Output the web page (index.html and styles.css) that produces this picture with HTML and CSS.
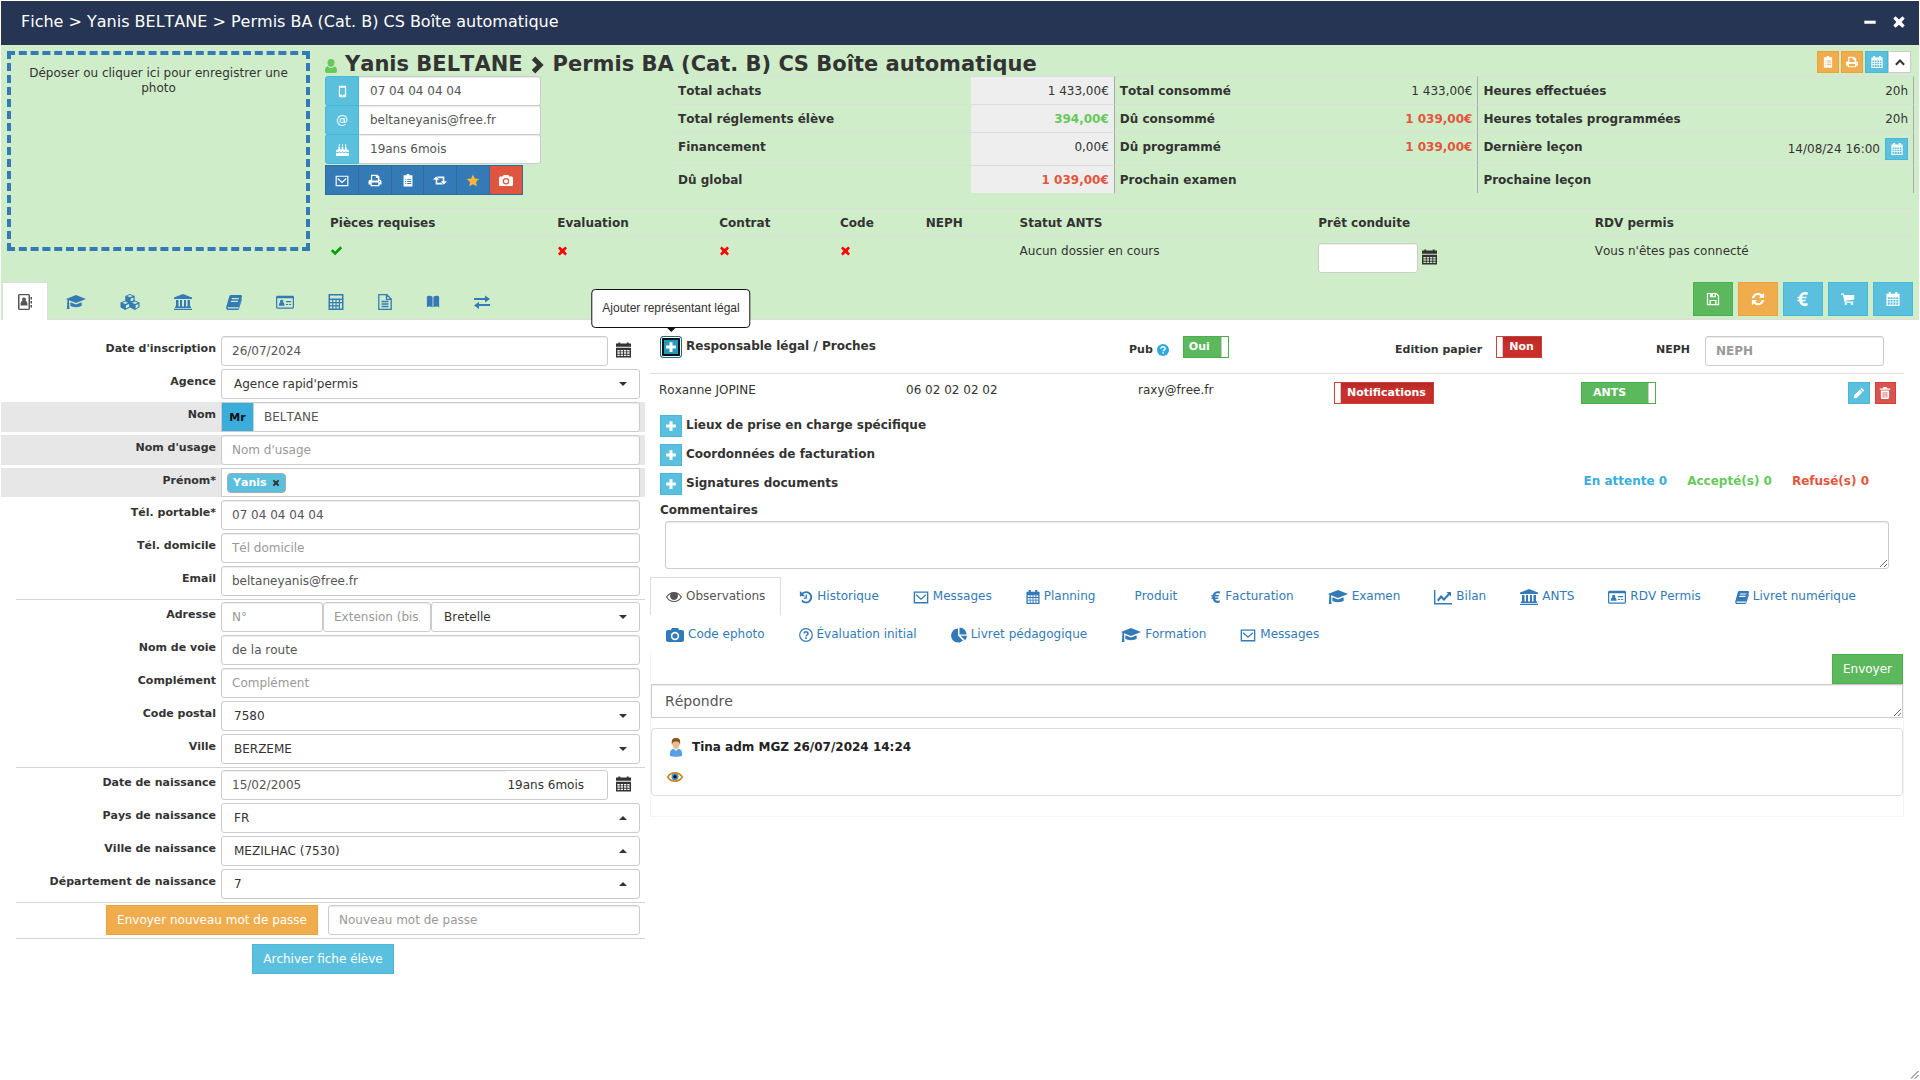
FILE: index.html
```html
<!DOCTYPE html>
<html lang="fr">
<head>
    <meta charset="UTF-8">
    <meta name="viewport" content="width=device-width, initial-scale=1.0">
    <title>Fiche - Yanis BELTANE</title>
    <link rel="stylesheet" href="styles.css">
</head>
<body>
    <!-- Icons -->
    <svg class="sprite" aria-hidden="true">
        <symbol id="i-user" viewBox="0 0 12 16"><path d="M6 1a3.6 3.6 0 0 1 3.5 3.8C9.500 7 8 8.900 6 8.900S2.500 7 2.500 4.800A3.600 3.600 0 0 1 6 1zM2.600 8.200C3.500 9.300 4.700 10 6 10s2.500-.7 3.400-1.800C11.500 8.800 12 11 12 13c0 1.300-.8 2-2 2H2c-1.200 0-2-.7-2-2 0-2 .5-4.200 2.600-4.800z"/></symbol>
        <symbol id="i-chevron" viewBox="0 0 12 16"><path d="M3.500.5 11 8l-7.500 7.500L.5 12.500 5 8 .5 3.500z"/></symbol>
        <symbol id="i-up" viewBox="0 0 16 16"><path d="M8 4l6.500 6.500-2 2L8 8l-4.500 4.500-2-2z"/></symbol>
        <symbol id="i-mobile" viewBox="0 0 16 16"><path fill-rule="evenodd" d="M5 1h6c.8 0 1.500.7 1.500 1.500v11c0 .8-.7 1.500-1.500 1.500H5c-.8 0-1.500-.7-1.500-1.500v-11C3.500 1.700 4.200 1 5 1zm0 2.500v8.500h6V3.500zM8 12.700a.8.8 0 1 0 0 1.600.8.8 0 0 0 0-1.600z"/></symbol>
        <symbol id="i-cake" viewBox="0 0 16 16"><path d="M3 4.500h2V8h2V4.500h2V8h2V4.500h2V8h.5C15 8 16 9 16 10c-1 1.500-2.500 1.500-4 0-1.500 1.500-2.500 1.500-4 0-1.500 1.500-2.500 1.500-4 0-1.500 1.500-3 1.500-4 0 0-1 1-2 2.500-2H3zM0 12c1.500 1 3 .7 4-.5 1.300 1.200 2.700 1.200 4 0 1.300 1.200 2.700 1.200 4 0 1 1.200 2.500 1.500 4 .5v4H0zM4 1c1 1 1 3 0 3s-1-2 0-3zm4 0c1 1 1 3 0 3s-1-2 0-3zm4 0c1 1 1 3 0 3s-1-2 0-3z"/></symbol>
        <symbol id="i-envelope" viewBox="0 0 18 16"><path d="M1.500 2.500h15v12h-15zM3.500 5.500 9 10.500l5.500-5" fill="none" stroke="currentColor" stroke-width="1.500"/></symbol>
        <symbol id="i-print" viewBox="0 0 16 16"><path fill-rule="evenodd" d="M3 1h8l2.500 2.500V7c1.500 0 2.500 1 2.500 2.500V13h-2.500v2h-11v-2H0V9.500C0 8 1 7 2.500 7H3zm1.500 1.500V8h7V5H9V2.500zm-.5 8v3h8v-3zM13.500 8.500a.7.7 0 1 0 0 1.500.7.7 0 0 0 0-1.500z"/></symbol>
        <symbol id="i-clip" viewBox="0 0 14 16"><path fill-rule="evenodd" d="M5 1.500C5 .5 6 0 7 0s2 .5 2 1.500h3.500v14h-11v-14zM3.500 6v1.200h1.200V6zm2.500 0v1.200h5V6zM3.500 8.500v1.200h1.200V8.500zm2.500 0v1.200h5V8.500zM3.500 11v1.200h1.200V11zm2.500 0v1.200h5V11z"/></symbol>
        <symbol id="i-retweet" viewBox="0 0 18 16"><path d="M4 3l4 4H5.500v4H11l2 2H3.500V7H0zM14 13l-4-4h2.500V5H7L5 3h9.500v6H18z"/></symbol>
        <symbol id="i-star" viewBox="0 0 16 16"><path d="M8 .5l2.300 4.900 5.300.7-3.900 3.700 1 5.300L8 12.500l-4.700 2.600 1-5.300L.4 6.100l5.300-.7z"/></symbol>
        <symbol id="i-camera" viewBox="0 0 18 16"><path fill-rule="evenodd" d="M6 1h6l1.200 2H16c1 0 2 .8 2 2v8c0 1.200-1 2-2 2H2c-1 0-2-.8-2-2V5c0-1.200 1-2 2-2h2.800zm3 3.800a4.200 4.200 0 1 0 0 8.400 4.200 4.200 0 0 0 0-8.400zm0 1.600a2.600 2.600 0 1 1 0 5.200 2.600 2.600 0 0 1 0-5.200z"/></symbol>
        <symbol id="i-check" viewBox="0 0 16 16"><path d="M1 8l2.300-2.300L6.300 8.700 12.700 2.300 15 4.600 6.300 13.300z"/></symbol>
        <symbol id="i-times" viewBox="0 0 16 16"><path d="M4 1.500L8 5l4-3.500L14.500 4 11 8l3.500 4-2.500 2.500L8 11l-4 3.500L1.500 12 5 8 1.500 4z"/></symbol>
        <symbol id="i-minus" viewBox="0 0 16 16"><path d="M1.500 6.500h13v3.500h-13z"/></symbol>
        <symbol id="i-plus" viewBox="0 0 16 16"><path d="M6 1.500h4V6h4.500v4H10v4.500H6V10H1.500V6H6z"/></symbol>
        <symbol id="i-cal" viewBox="0 0 16 16"><path fill-rule="evenodd" d="M3 0h2.500v2h5V0H13v2h2.500v14H.5V2H3zM2 6v2h2.300V6zm3.200 0v2h2.300V6zm3.300 0v2h2.300V6zm3.300 0v2H14V6zM2 9v2h2.300V9zm3.200 0v2h2.300V9zm3.300 0v2h2.300V9zm3.300 0v2H14V9zM2 12v2.500h2.300V12zm3.200 0v2.500h2.300V12zm3.300 0v2.500h2.300V12zm3.300 0v2.500H14V12z"/></symbol>
        <symbol id="i-calsolid" viewBox="0 0 16 16"><path fill-rule="evenodd" d="M2.500 0h2v1h7V0h2v1H16v3.500H0V1h2.500zM0 5.500h16V16H0zM1.500 8v1.500H4V8zM5 8v1.500h2.500V8zm3.500 0v1.500H11V8zM12 8v1.500h2.500V8zM1.500 10.500V12H4v-1.500zm3.500 0V12h2.500v-1.500zm3.500 0V12H11v-1.500zm3.500 0V12h2.500v-1.500zM1.500 13v1.500H4V13zM5 13v1.500h2.500V13zm3.500 0v1.500H11V13zm3.500 0v1.500h2.500V13z"/></symbol>
        <symbol id="i-book2" viewBox="0 0 14 16"><path fill-rule="evenodd" d="M1.500 0h9C11.300 0 12 .7 12 1.500v13c0 .8-.7 1.500-1.500 1.500h-9C.7 16 0 15.300 0 14.500v-13C0 .7.7 0 1.500 0zm0 1.300v13.400h9V1.300zM6 3.500a2 2 0 0 1 1.500 3.300C9 7.200 9.500 8.500 9.500 11.500h-7c0-3 .5-4.300 2-4.700A2 2 0 0 1 6 3.500zM12.500 3H14v2.500h-1.500zm0 4H14v2.500h-1.500zm0 4H14v2.500h-1.500z"/></symbol>
        <symbol id="i-cap" viewBox="0 0 20 16"><path d="M10 1l10 4-10 4L3 6.300v2.200c.6.400.6 1 .1 1.400L3.500 15H.8l.5-5.100c-.5-.4-.5-1 .1-1.400V5.700L0 5zM4.500 8.200L10 10.500l5.500-2.300.3 3.300C14 13.800 6 13.800 4.200 11.500z"/></symbol>
        <symbol id="i-cubes" viewBox="0 0 20 16"><path fill-rule="evenodd" d="M10 0l4.700 1.900v4.600l4.800 2v4.800L14.900 16 10 13.500 5.100 16 .5 13.300V8.500l4.800-2V1.900zM7 2l3 1.200L13 2l-3-1zm3.700 2.500v3L13.500 6.300V3.400zM2.300 8.700l2.900 1.200 2.900-1.200-2.900-1.200zM5.900 11.200v3.200l3.200-1.600V9.900zM12 8.700l2.900 1.200 2.900-1.200-2.900-1.200zM15.600 11.200v3.200l2.700-1.500v-3z"/></symbol>
        <symbol id="i-bank" viewBox="0 0 18 16"><path d="M9 0l9 3.500V5H0V3.500zM2 6h2.500v6.500H6V6h2v6.500h2V6h2v6.500h1.500V6H16v6.500h1V14H1v-1.500h1zM0 14.800h18V16H0z"/></symbol>
        <symbol id="i-book" viewBox="0 0 16 16"><path fill-rule="evenodd" d="M5 1h9.500c1 0 1.700.8 1.400 1.700l-3 9.500c-.2.600-.8 1-1.400 1H2.500c-.8 0-1 .3-.8.700.1.300.5.600 1 .6h9.500l3.300-10c.6.500.5 1 .3 1.600L13 14.700c-.2.800-.8 1.300-1.500 1.300H2.500C1 16 0 14.700.2 13.300l3-10.800C3.500 1.500 4 1 5 1zm1 3l-.4 1.200h7L13 4zm-.8 2.700l-.4 1.200h7l.4-1.200z"/></symbol>
        <symbol id="i-card" viewBox="0 0 19 16"><path fill-rule="evenodd" d="M1.500 1.500h16c.8 0 1.500.7 1.500 1.500v10.500c0 .8-.7 1.500-1.500 1.500h-16C.7 15 0 14.300 0 13.500V3c0-.8.7-1.500 1.500-1.500zM1.300 4v9.700h16.400V4zM6 5.500a1.700 1.700 0 0 1 1.300 2.800C8.700 8.700 9 10 9 12H3c0-2 .3-3.300 1.700-3.700A1.700 1.700 0 0 1 6 5.500zM10.500 7h5.500v1.200h-5.500zm0 3h2.300v1.200h-2.300zm3.300 0H16v1.200h-2.200z"/></symbol>
        <symbol id="i-calc" viewBox="0 0 16 16"><path fill-rule="evenodd" d="M.5 0h15v16H.5zM2 1.500v3h12v-3zM2 6v2h2.200V6zm3.300 0v2h2.200V6zm3.300 0v2h2.200V6zM12 6v2h2V6zM2 9.300v2h2.200v-2zm3.300 0v2h2.200v-2zm3.300 0v2h2.200v-2zm3.400 0v5.200h2V9.300zM2 12.500v2h2.200v-2zm3.300 0v2h2.200v-2zm3.300 0v2h2.200v-2z"/></symbol>
        <symbol id="i-file" viewBox="0 0 14 16"><path fill="none" stroke="currentColor" stroke-width="1.300" d="M.8.700h8l4.400 4.400v10.200H.8zM8.500.7v4.700h4.700M3.500 7.500h7M3.500 10h7M3.500 12.500h7"/></symbol>
        <symbol id="i-open" viewBox="0 0 16 16"><path d="M1 2l1-.8c2-.6 4-.3 5.500.8v12C6 13 4 12.700 2 13.400l-1 .8zM15 2l-1-.8c-2-.6-4-.3-5.500.8v12c1.500-1 3.500-1.300 5.500-.6l1 .8z"/></symbol>
        <symbol id="i-exchange" viewBox="0 0 16 16"><path d="M0 4h11V1.500L16 5l-5 3.500V6H0zM16 10H5V7.800L0 11.500 5 15v-3h11z"/></symbol>
        <symbol id="i-save" viewBox="0 0 16 16"><path fill-rule="evenodd" d="M1 1h11l3 3v11H1zm1.400 1.400v11.200H4V9h8v4.600h1.600V4.800l-2.200-2.400V6H4.500V2.400zM5.400 10.300v3.300h5.200v-3.300zM8 2.400v2.400h1.800V2.400z"/></symbol>
        <symbol id="i-refresh" viewBox="0 0 16 16"><path d="M1 7C1.500 3.500 4.500 1 8 1c1.800 0 3.500.7 4.800 1.900L15 1v5.800H9l2.200-2.200C10.300 3.800 9.200 3.300 8 3.300 6 3.300 4.200 4.700 3.600 7zM15 9c-.5 3.500-3.500 6-7 6-1.800 0-3.500-.7-4.800-1.900L1 15V9.200h6l-2.200 2.200c.9.800 2 1.300 3.200 1.300 2 0 3.800-1.400 4.400-3.700z"/></symbol>
        <symbol id="i-euro" viewBox="0 0 12 16"><path d="M11 1.500l-.7 2.600C8 3 5.800 3.600 5.100 5.700h4.500L9.200 7.300H4.700v1.400h4.200l-.4 1.600H5.100c.7 2.100 2.900 2.700 5.400 1.700V14.700C6.500 16 2.900 14.300 2.200 10.300H.5V8.700h1.400V7.300H.5V5.700h1.700C3 1.800 6.800.1 11 1.500z"/></symbol>
        <symbol id="i-cart" viewBox="0 0 18 16"><path d="M0 1h3.500l.6 1.700H17v6L6 10.200l.2 1.100H16v1.500H4.700L2.500 2.500H0z"/><circle cx="6.200" cy="14.200" r="1.500"/><circle cx="14" cy="14.200" r="1.500"/></symbol>
        <symbol id="i-pencil" viewBox="0 0 16 16"><path d="M11.500 1l3.500 3.500-1.700 1.700L9.800 2.700zM9 3.500L12.500 7 5 14.500 1 15l.5-4z"/></symbol>
        <symbol id="i-trash" viewBox="0 0 16 16"><path fill-rule="evenodd" d="M6 0h4l1 2h4v1.500H1V2h4zM2.500 4.500h11V14c0 1-.7 2-1.700 2H4.200c-1 0-1.700-1-1.700-2zM5 6.500V14h1V6.500zm2.500 0V14h1V6.500zm2.500 0V14h1V6.500z"/></symbol>
        <symbol id="i-help" viewBox="0 0 16 16"><circle cx="8" cy="8" r="8"/><path d="M5.200 6.200C5.200 2.700 11 2.800 10.800 6.200c0 1.800-2.600 1.800-2.600 3.500" fill="none" stroke="#fff" stroke-width="2"/><path d="M7.200 11h2v2h-2z" fill="#fff"/></symbol>
        <symbol id="i-eye" viewBox="0 0 16 16"><path fill-rule="evenodd" d="M8 3c3.500 0 6.300 2 8 5-1.700 3-4.500 5-8 5s-6.300-2-8-5c1.700-3 4.500-5 8-5zM1.300 8C2.800 10.400 5.200 12 8 12s5.200-1.600 6.700-4c-.8-1.300-1.900-2.300-3.200-3a4 4 0 1 1-7 0c-1.300.7-2.400 1.700-3.200 3z"/></symbol>
        <symbol id="i-history" viewBox="0 0 16 16"><path d="M1 1l2.300 2.200A7 7 0 1 1 2.500 12.500l1.600-1.400a4.800 4.800 0 1 0 .7-6.300L7 7H1z"/><path d="M7.500 5H9v5H5.500V8.500h2z"/></symbol>
        <symbol id="i-question" viewBox="0 0 16 16"><circle cx="8" cy="8" r="7.200" fill="none" stroke="currentColor" stroke-width="1.400"/><path d="M5.700 6.300C5.800 3.700 10.400 3.800 10.300 6.400 10.200 8 8 8 8 9.700" fill="none" stroke="currentColor" stroke-width="1.700"/><path d="M7.100 10.700h1.800v1.800H7.100z"/></symbol>
        <symbol id="i-pie" viewBox="0 0 16 16"><path d="M7 1.500v7l5 5A7 7 0 1 1 7 1.500zM8.500.5a7 7 0 0 1 7 7h-7zM9.500 8.800H16a7 7 0 0 1-2 4.500z"/></symbol>
        <symbol id="i-chart" viewBox="0 0 18 16"><path d="M0 1h1.400v13H18v1.400H0zM3 11l4-5 3 3 4-4.500L12.500 3H17v4.500l-1.500-1.400L10 12 7.200 9.300 4.500 12.500z"/></symbol>
        <symbol id="i-person" viewBox="0 0 14 19"><path d="M1 18c-.7-4 .5-6.500 3.500-7.200h5c3 .7 4.200 3.200 3.500 7.200-3 1-9 1-12 0z" fill="#5b9ee8"/><path d="M4.500 10.500L7 13l2.500-2.500z" fill="#fff"/><ellipse cx="7" cy="6" rx="3.500" ry="5" fill="#e9bd8e"/><path d="M3 7C2 1 4 0 7 0s5 1 4 7C10.500 4 9 3 7 3.500 5 3 3.500 4 3 7z" fill="#845522"/></symbol>
        <symbol id="i-eyecolor" viewBox="0 0 16 12"><path d="M.8 6C4 .5 12 .5 15.200 6 12 11.500 4 11.500.8 6z" fill="#fff" stroke="#c98715" stroke-width="1.600"/><circle cx="8" cy="5.800" r="3.500" fill="#4d8ac9"/><circle cx="8" cy="5.800" r="1.700" fill="#111"/></symbol>
        <symbol id="i-grip" viewBox="0 0 9 9"><path d="M1 8.500L8.500 1M5 8.500L8.500 5" stroke="#555" fill="none"/></symbol>
    </svg>

    <header class="titlebar">
        <div class="crumbs">Fiche &gt; Yanis BELTANE &gt; Permis BA (Cat. B) CS Boîte automatique</div>
        <div class="window-tools">
            <button type="button" aria-label="Réduire"><svg class="icon"><use href="#i-minus"/></svg></button>
            <button type="button" aria-label="Fermer"><svg class="icon"><use href="#i-times"/></svg></button>
        </div>
    </header>

    <!-- Résumé de l'élève -->
    <section class="summary">
        <div class="summary-top">
            <div class="photo-drop">Déposer ou cliquer ici pour enregistrer une photo</div>
            <div class="student">
                <div class="student-head">
                    <h1><svg class="icon user"><use href="#i-user"/></svg><span>Yanis BELTANE</span><svg class="icon sep"><use href="#i-chevron"/></svg><span>Permis BA (Cat. B) CS Boîte automatique</span></h1>
                    <div class="quick">
                        <button type="button" class="btn btn-xs warning" aria-label="Dossier"><svg class="icon"><use href="#i-clip"/></svg></button>
                        <button type="button" class="btn btn-xs warning" aria-label="Imprimer"><svg class="icon"><use href="#i-print"/></svg></button>
                        <button type="button" class="btn btn-xs info" aria-label="Planning"><svg class="icon"><use href="#i-cal"/></svg></button>
                        <button type="button" class="btn btn-xs default" aria-label="Replier"><svg class="icon"><use href="#i-up"/></svg></button>
                    </div>
                </div>
                <div class="student-body">
                    <div class="contact">
                        <div class="addon"><label for="c-tel"><svg class="icon"><use href="#i-mobile"/></svg></label><input id="c-tel" type="text" aria-label="Téléphone" value="07 04 04 04 04"></div>
                        <div class="addon"><label for="c-mail">@</label><input id="c-mail" type="text" aria-label="Email" value="beltaneyanis@free.fr"></div>
                        <div class="addon"><label for="c-age"><svg class="icon"><use href="#i-cake"/></svg></label><input id="c-age" type="text" aria-label="Age" value="19ans 6mois"></div>
                        <div class="contact-buttons">
                            <button type="button" aria-label="Email"><svg class="icon"><use href="#i-envelope"/></svg></button>
                            <button type="button" aria-label="Imprimer"><svg class="icon"><use href="#i-print"/></svg></button>
                            <button type="button" aria-label="Dossier"><svg class="icon"><use href="#i-clip"/></svg></button>
                            <button type="button" aria-label="Transférer"><svg class="icon"><use href="#i-retweet"/></svg></button>
                            <button type="button" class="star" aria-label="Favori"><svg class="icon"><use href="#i-star"/></svg></button>
                            <button type="button" class="photo" aria-label="Photo"><svg class="icon"><use href="#i-camera"/></svg></button>
                        </div>
                    </div>
                    <table class="finance">
                        <colgroup><col class="f1"><col class="f2"><col class="f3"><col class="f4"><col class="f5"><col class="f6"></colgroup>
                        <tr><th>Total achats</th><td class="shade">1 433,00€</td><th>Total consommé</th><td class="line">1 433,00€</td><th>Heures effectuées</th><td class="line">20h</td></tr>
                        <tr><th>Total réglements élève</th><td class="shade good">394,00€</td><th>Dû consommé</th><td class="line bad">1 039,00€</td><th>Heures totales programmées</th><td class="line">20h</td></tr>
                        <tr><th>Financement</th><td class="shade">0,00€</td><th>Dû programmé</th><td class="line bad">1 039,00€</td><th>Dernière leçon</th><td class="line last"><div class="lesson">14/08/24 16:00 <button type="button" class="btn btn-xs info" aria-label="Voir"><svg class="icon"><use href="#i-cal"/></svg></button></div></td></tr>
                        <tr><th>Dû global</th><td class="shade bad">1 039,00€</td><th>Prochain examen</th><td class="line"></td><th>Prochaine leçon</th><td class="line"></td></tr>
                    </table>
                </div>
                <table class="status">
                    <colgroup><col class="s1"><col class="s2"><col class="s3"><col class="s4"><col class="s5"><col class="s6"><col class="s7"><col class="s8"></colgroup>
                    <tr><th>Pièces requises</th><th>Evaluation</th><th>Contrat</th><th>Code</th><th>NEPH</th><th>Statut ANTS</th><th>Prêt conduite</th><th>RDV permis</th></tr>
                    <tr>
                        <td><svg class="icon ok"><use href="#i-check"/></svg></td>
                        <td><svg class="icon ko"><use href="#i-times"/></svg></td>
                        <td><svg class="icon ko"><use href="#i-times"/></svg></td>
                        <td><svg class="icon ko"><use href="#i-times"/></svg></td>
                        <td></td>
                        <td>Aucun dossier en cours</td>
                        <td><div class="loan"><input type="text" aria-label="Prêt conduite"><svg class="icon cal"><use href="#i-calsolid"/></svg></div></td>
                        <td>Vous n'êtes pas connecté</td>
                    </tr>
                </table>
            </div>
        </div>
        <div class="summary-bottom">
            <nav class="tabs main-tabs">
                <a href="#" class="active" aria-label="Fiche"><svg class="icon"><use href="#i-book2"/></svg></a>
                <a href="#" aria-label="Formation"><svg class="icon w20"><use href="#i-cap"/></svg></a>
                <a href="#" aria-label="Produits"><svg class="icon w20"><use href="#i-cubes"/></svg></a>
                <a href="#" aria-label="ANTS"><svg class="icon w18"><use href="#i-bank"/></svg></a>
                <a href="#" aria-label="Livret"><svg class="icon w16"><use href="#i-book"/></svg></a>
                <a href="#" aria-label="Permis"><svg class="icon w18"><use href="#i-card"/></svg></a>
                <a href="#" aria-label="Comptes"><svg class="icon w16"><use href="#i-calc"/></svg></a>
                <a href="#" aria-label="Documents"><svg class="icon"><use href="#i-file"/></svg></a>
                <a href="#" aria-label="Code"><svg class="icon"><use href="#i-open"/></svg></a>
                <a href="#" aria-label="Échanges"><svg class="icon w16"><use href="#i-exchange"/></svg></a>
            </nav>
            <div class="actions">
                <button type="button" class="btn success" aria-label="Enregistrer"><svg class="icon"><use href="#i-save"/></svg></button>
                <button type="button" class="btn warning" aria-label="Actualiser"><svg class="icon"><use href="#i-refresh"/></svg></button>
                <button type="button" class="btn info" aria-label="Encaisser"><svg class="icon"><use href="#i-euro"/></svg></button>
                <button type="button" class="btn info" aria-label="Acheter"><svg class="icon"><use href="#i-cart"/></svg></button>
                <button type="button" class="btn info" aria-label="Planning"><svg class="icon"><use href="#i-cal"/></svg></button>
            </div>
        </div>
    </section>

    <main class="content">
        <!-- Formulaire -->
        <form class="identity">
            <div class="row"><label for="inscr">Date d'inscription</label><div class="field"><input id="inscr" type="text" value="26/07/2024"><svg class="icon cal"><use href="#i-calsolid"/></svg></div></div>
            <div class="row"><label for="agence">Agence</label><div class="field select"><select id="agence"><option>Agence rapid'permis</option></select></div></div>
            <div class="row grey"><label for="nom">Nom</label><div class="field"><span class="civ">Mr</span><input id="nom" class="after-civ" type="text" value="BELTANE"></div></div>
            <div class="row grey"><label for="usage">Nom d'usage</label><div class="field"><input id="usage" type="text" placeholder="Nom d'usage"></div></div>
            <div class="row grey"><label for="prenom">Prénom*</label><div class="field tags"><span class="tag">Yanis <svg class="icon"><use href="#i-times"/></svg></span><input id="prenom" type="text"></div></div>
            <div class="row"><label for="tel">Tél. portable*</label><div class="field"><input id="tel" type="text" value="07 04 04 04 04"></div></div>
            <div class="row"><label for="dom">Tél. domicile</label><div class="field"><input id="dom" type="text" placeholder="Tél domicile"></div></div>
            <div class="row"><label for="mail">Email</label><div class="field"><input id="mail" type="text" value="beltaneyanis@free.fr"></div></div>
            <hr>
            <div class="row"><label for="num">Adresse</label><div class="field"><input id="num" class="num" type="text" placeholder="N°"><input class="ext" type="text" aria-label="Extension" placeholder="Extension (bis, ter...)"><div class="select street"><select aria-label="Type de voie"><option>Bretelle</option></select></div></div></div>
            <div class="row"><label for="voie">Nom de voie</label><div class="field"><input id="voie" type="text" value="de la route"></div></div>
            <div class="row"><label for="compl">Complément</label><div class="field"><input id="compl" type="text" placeholder="Complément"></div></div>
            <div class="row"><label for="cp">Code postal</label><div class="field select"><select id="cp"><option>7580</option></select></div></div>
            <div class="row"><label for="ville">Ville</label><div class="field select"><select id="ville"><option>BERZEME</option></select></div></div>
            <hr>
            <div class="row"><label for="naiss">Date de naissance</label><div class="field"><div class="birth"><input id="naiss" type="text" value="15/02/2005"><span>19ans 6mois</span></div><svg class="icon cal"><use href="#i-calsolid"/></svg></div></div>
            <div class="row"><label for="pays">Pays de naissance</label><div class="field select up"><select id="pays"><option>FR</option></select></div></div>
            <div class="row"><label for="vnaiss">Ville de naissance</label><div class="field select up"><select id="vnaiss"><option>MEZILHAC (7530)</option></select></div></div>
            <div class="row"><label for="dep">Département de naissance</label><div class="field select up"><select id="dep"><option>7</option></select></div></div>
            <hr>
            <div class="row password"><button type="button" class="btn text warning">Envoyer nouveau mot de passe</button><input type="text" aria-label="Nouveau mot de passe" placeholder="Nouveau mot de passe"></div>
            <hr>
            <div class="archive"><button type="button" class="btn text info">Archiver fiche élève</button></div>
        </form>

        <!-- Détails -->
        <section class="details">
            <div class="guardian-head">
                <div class="add-line"><div class="tip-anchor"><button type="button" class="btn btn-xs info focused" aria-label="Ajouter représentant légal"><svg class="icon"><use href="#i-plus"/></svg></button><div class="tooltip" role="tooltip">Ajouter représentant légal</div></div><h2>Responsable légal / Proches</h2></div>
                <div class="pub"><span class="small-label">Pub <svg class="icon"><use href="#i-help"/></svg></span><label class="toggle on"><input type="checkbox" checked>Oui</label></div>
                <div class="paper"><span class="small-label">Edition papier</span><label class="toggle off"><input type="checkbox">Non</label></div>
                <div class="neph"><label class="small-label" for="neph">NEPH</label><input id="neph" type="text" placeholder="NEPH"></div>
            </div>
            <div class="guardian">
                <span>Roxanne JOPINE</span>
                <span>06 02 02 02 02</span>
                <span>raxy@free.fr</span>
                <div><label class="toggle off"><input type="checkbox">Notifications</label></div>
                <div><label class="toggle on wide"><input type="checkbox" checked>ANTS</label></div>
                <div class="guardian-tools">
                    <button type="button" class="btn btn-xs info" aria-label="Modifier"><svg class="icon"><use href="#i-pencil"/></svg></button>
                    <button type="button" class="btn btn-xs danger" aria-label="Supprimer"><svg class="icon"><use href="#i-trash"/></svg></button>
                </div>
            </div>
            <div class="add-line"><button type="button" class="btn btn-xs info" aria-label="Ajouter un lieu"><svg class="icon"><use href="#i-plus"/></svg></button><h2>Lieux de prise en charge spécifique</h2></div>
            <div class="add-line"><button type="button" class="btn btn-xs info" aria-label="Ajouter des coordonnées"><svg class="icon"><use href="#i-plus"/></svg></button><h2>Coordonnées de facturation</h2></div>
            <div class="add-line"><button type="button" class="btn btn-xs info" aria-label="Ajouter une signature"><svg class="icon"><use href="#i-plus"/></svg></button><h2>Signatures documents</h2>
                <div class="counts"><span class="wait">En attente 0</span><span class="good">Accepté(s) 0</span><span class="bad">Refusé(s) 0</span></div>
            </div>
            <label class="comment-label" for="comments">Commentaires</label>
            <textarea id="comments" class="comments"></textarea>

            <nav class="tabs sub-tabs">
                <a href="#" class="active"><svg class="icon w16"><use href="#i-eye"/></svg>Observations</a>
                <a href="#"><svg class="icon"><use href="#i-history"/></svg>Historique</a>
                <a href="#"><svg class="icon w16"><use href="#i-envelope"/></svg>Messages</a>
                <a href="#"><svg class="icon"><use href="#i-cal"/></svg>Planning</a>
                <a href="#" class="no-icon">Produit</a>
                <a href="#"><svg class="icon w10"><use href="#i-euro"/></svg>Facturation</a>
                <a href="#"><svg class="icon w20"><use href="#i-cap"/></svg>Examen</a>
                <a href="#"><svg class="icon w18"><use href="#i-chart"/></svg>Bilan</a>
                <a href="#"><svg class="icon w18"><use href="#i-bank"/></svg>ANTS</a>
                <a href="#"><svg class="icon w18"><use href="#i-card"/></svg>RDV Permis</a>
                <a href="#"><svg class="icon"><use href="#i-book"/></svg>Livret numérique</a>
                <a href="#"><svg class="icon w18"><use href="#i-camera"/></svg>Code ephoto</a>
                <a href="#"><svg class="icon"><use href="#i-question"/></svg>Évaluation initial</a>
                <a href="#"><svg class="icon w16"><use href="#i-pie"/></svg>Livret pédagogique</a>
                <a href="#"><svg class="icon w20"><use href="#i-cap"/></svg>Formation</a>
                <a href="#"><svg class="icon w16"><use href="#i-envelope"/></svg>Messages</a>
            </nav>
            <div class="thread">
                <div class="send"><button type="button" class="btn text success">Envoyer</button></div>
                <textarea class="reply" aria-label="Répondre" placeholder="Répondre"></textarea>
                <article class="note">
                    <div class="author"><svg class="icon person"><use href="#i-person"/></svg>Tina adm MGZ 26/07/2024 14:24</div>
                    <svg class="icon seen"><use href="#i-eyecolor"/></svg>
                </article>
            </div>
        </section>
    </main>
    <svg class="icon grip"><use href="#i-grip"/></svg>
</body>
</html>
```
FILE: styles.css
```css
:root {
    --navy: #263553;
    --green-bg: #d0edca;
    --blue: #337ab7;
    --info: #5bc0de;
    --success: #5cb85c;
    --warning: #f0ad4e;
    --danger: #d9534f;
    --good: #67c95c;
    --bad: #e4553d;
}

* {
    box-sizing: border-box;
    margin: 0;
    padding: 0;
}

body {
    font-family: Verdana, "DejaVu Sans", sans-serif;
    font-size: 12px;
    line-height: 17px;
    font-kerning: none;
    color: #333;
    background: #fff;
    padding: 1px 1px 0;
}

.sprite {
    display: none;
}

.icon {
    width: 14px;
    height: 16px;
    fill: currentColor;
    flex: none;
}

.w10 { width: 10px; }
.w16 { width: 16px; }
.w18 { width: 18px; }
.w20 { width: 20px; }

input,
select,
textarea {
    font: inherit;
    color: #555;
    border: 1px solid #ccc;
    border-radius: 3px;
    background: #fff;
    height: 30px;
    padding: 0 10px;
    min-width: 0;
    box-shadow: inset 0 1px 1px rgba(0,0,0,0.08);
}

input::placeholder {
    color: #999;
}

button {
    font: inherit;
    cursor: pointer;
}

/* Title bar */
.titlebar {
    display: flex;
    justify-content: space-between;
    align-items: center;
    height: 44px;
    padding: 0 13px 3px 20px;
    background: var(--navy);
    color: white;
}

.crumbs {
    font-size: 16px;
    line-height: 21px;
}

.window-tools {
    display: flex;
    gap: 15px;
}

.window-tools button {
    display: flex;
    border: none;
    background: none;
    color: white;
}

/* Buttons */
.btn {
    display: inline-flex;
    align-items: center;
    justify-content: center;
    width: 40px;
    height: 34px;
    border: 1px solid transparent;
    color: white;
}

.btn-xs {
    width: 23px;
    height: 22px;
}

.btn-xs .icon {
    width: 12px;
    height: 12px;
}

.btn.text {
    width: auto;
    height: 30px;
    padding: 0 10px;
}

.info { background: var(--info); border-color: #46b8da; }
.success { background: var(--success); border-color: #4cae4c; }
.warning { background: var(--warning); border-color: #eea236; }
.danger { background: var(--danger); border-color: #d43f3a; }
.default { background: white; border-color: #ccc; color: #333; }

/* Summary */
.summary {
    background: var(--green-bg);
}

.summary-top {
    display: flex;
    padding: 6px 5px 5px 6px;
}

.photo-drop {
    width: 303px;
    height: 200px;
    padding: 11px 12px;
    border: 4px dashed var(--blue);
    text-align: center;
    line-height: 15px;
    margin-right: 15px;
    flex: none;
}

.student {
    flex: 1;
    min-width: 0;
}

.student-head {
    display: flex;
    justify-content: space-between;
    height: 25px;
    padding-right: 3px;
}

.student-head h1 {
    display: flex;
    align-items: center;
    gap: 8px;
    font-size: 21px;
    line-height: 27px;
    height: 27px;
}

.student-head .user {
    width: 12px;
    height: 18px;
    margin-top: 3px;
    color: var(--good);
}

.student-head .sep {
    height: 18px;
}

.quick {
    display: flex;
}

.quick .warning {
    width: 22px;
    margin-right: 2px;
}

.student-body {
    display: flex;
    gap: 132px;
    margin-bottom: 13px;
}

.contact {
    width: 216px;
    flex: none;
}

.addon {
    display: flex;
    margin-bottom: -1px;
}

.addon label {
    display: flex;
    align-items: center;
    justify-content: center;
    width: 34px;
    border: 1px solid #46b8da;
    border-radius: 3px 0 0 3px;
    background: var(--info);
    color: white;
}

.addon .icon {
    width: 13px;
    height: 13px;
}

.addon input {
    flex: 1;
    border-left: 0;
    border-radius: 0 3px 3px 0;
    padding: 0 11px;
}

.contact-buttons {
    display: flex;
    width: 198px;
    margin-top: 2px;
}

.contact-buttons button {
    display: flex;
    align-items: center;
    justify-content: center;
    flex: 1;
    height: 30px;
    border: 1px solid #2e6da4;
    border-right-width: 0;
    background: var(--blue);
    color: white;
}

.contact-buttons .icon {
    width: 14px;
    height: 13px;
}

.contact-buttons .star {
    color: #fbb537;
}

.contact-buttons .photo {
    background: #df5540;
    border-right-width: 1px;
}

table {
    border-collapse: separate;
    border-spacing: 0;
    table-layout: fixed;
    width: 100%;
}

th,
td {
    border-top: 1px solid #ddd;
    padding: 6px 5px 4px;
    text-align: left;
    vertical-align: top;
}

.finance {
    flex: 1;
    align-self: flex-start;
}

.finance td {
    text-align: right;
}

.finance tr {
    height: 28px;
}

.finance .shade {
    background: #eee;
    border-right: 1px solid #aaa;
}

.finance .line {
    border-right: 1px solid #aaa;
}

.finance .last {
    padding: 5px;
}

.f1 { width: 24%; }
.f2 { width: 11.6%; }
.f3 { width: 14%; }
.f4 { width: 15.3%; }
.f5 { width: 18%; }
.f6 { width: 17.1%; }

.lesson {
    display: flex;
    align-items: center;
    justify-content: flex-end;
    gap: 5px;
}

.good { color: var(--good); font-weight: bold; }
.bad { color: var(--bad); font-weight: bold; }
.wait { color: #39aede; font-weight: bold; }

.s1 { width: 14.3%; }
.s2 { width: 10.2%; }
.s3 { width: 7.6%; }
.s4 { width: 5.4%; }
.s5 { width: 5.9%; }
.s6 { width: 18.8%; }
.s7 { width: 17.4%; }
.s8 { width: 20.4%; }

.status .icon {
    display: block;
}

.status .ok { color: #00a000; width: 13px; }
.status .ko { color: red; width: 11px; }

.loan {
    display: flex;
    gap: 4px;
}

.loan input {
    width: 100px;
}

.cal {
    width: 15px;
    height: 16px;
    margin-top: 6px;
}

/* Tabs */
.summary-bottom {
    display: flex;
    justify-content: space-between;
    border-bottom: 1px solid #ddd;
}

.tabs {
    display: flex;
    gap: 2px;
}

.tabs a {
    display: flex;
    align-items: center;
    gap: 4px;
    height: 38px;
    padding: 0 15px;
    border: 1px solid transparent;
    border-bottom: 0;
    color: var(--blue);
    text-decoration: none;
}

.tabs .active {
    background: white;
    border-color: #ddd;
    color: #555;
}

.main-tabs {
    padding-left: 1px;
    margin-bottom: -1px;
}

.actions {
    display: flex;
    gap: 5px;
    padding-right: 6px;
}

/* Form */
.content {
    display: flex;
    align-items: flex-start;
    gap: 5px;
    padding-top: 16px;
}

.identity {
    width: 644px;
    flex: none;
}

.row {
    display: flex;
    padding-right: 5px;
    margin-bottom: 3px;
}

.row > label {
    width: 220px;
    padding: 5px 5px 0 0;
    text-align: right;
    font-size: 11px;
    line-height: 16px;
    font-weight: bold;
}

.grey {
    background: #e7e7e7;
}

.field {
    display: flex;
    flex: 1;
    min-width: 0;
}

.field input {
    flex: 1;
}

.field .cal {
    margin-left: 8px;
    margin-right: 9px;
}

.civ {
    display: flex;
    align-items: center;
    justify-content: center;
    width: 32px;
    border: 1px solid #ccc;
    border-right: 0;
    background: #3badda;
    color: #111;
    font-size: 11px;
    font-weight: bold;
}

.field .after-civ {
    border-radius: 0 3px 3px 0;
}

.select {
    position: relative;
}

.select select {
    width: 100%;
    appearance: none;
    padding: 0 12px;
    color: #333;
    box-shadow: none;
}

.select::after {
    content: "";
    position: absolute;
    right: 13px;
    top: 13px;
    border: 4px solid transparent;
    border-top-color: #333;
    border-bottom-width: 0;
}

.select.up::after {
    border-top-width: 0;
    border-bottom: 4px solid #333;
}

.tags {
    align-items: center;
    height: 29px;
    padding-left: 5px;
    border: 1px solid #ccc;
    background: white;
}

.tags input {
    height: 20px;
    border: none;
    box-shadow: none;
}

.tag {
    display: flex;
    align-items: center;
    gap: 5px;
    height: 20px;
    padding: 0 5px;
    border: 1px solid #aaa;
    border-radius: 4px;
    background: var(--info);
    color: white;
    font-size: 11px;
    font-weight: bold;
}

.tag .icon {
    width: 8px;
    height: 8px;
    color: #333;
}

.field .num {
    flex: 0 0 102px;
}

.field .ext {
    flex: 0 0 108px;
}

.street {
    flex: 1;
}

.birth {
    display: flex;
    flex: 1;
    align-items: center;
    border: 1px solid #ccc;
    border-radius: 3px;
    padding-right: 23px;
    min-width: 0;
}

.birth input {
    height: 28px;
    border: none;
}

hr {
    height: 1px;
    border: none;
    background: #d4d4d4;
    margin: 0 0 2px 15px;
}

.password {
    justify-content: flex-end;
    gap: 10px;
}

.password input {
    width: 312px;
}

.archive {
    text-align: center;
    padding-top: 3px;
}

/* Details */
.details {
    flex: 1;
    min-width: 0;
    padding-right: 15px;
}

.guardian-head {
    display: grid;
    grid-template-columns: 479fr 245fr 281fr 249fr;
    height: 38px;
    border-bottom: 1px solid #ddd;
}

.guardian-head > div {
    display: flex;
}

.add-line {
    display: flex;
    align-items: flex-start;
    gap: 4px;
    height: 22px;
    margin: 0 0 7px 10px;
}

.add-line .btn {
    width: 22px;
}

.guardian-head .add-line {
    margin-bottom: 0;
}

h2 {
    font-size: 12px;
    line-height: 20px;
}

.small-label {
    display: flex;
    align-items: center;
    gap: 4px;
    height: 27px;
    font-size: 11px;
    font-weight: bold;
}

.small-label .icon {
    width: 12px;
    height: 12px;
    color: #2fa9dc;
}

.pub,
.paper,
.neph {
    gap: 14px;
}

.paper {
    padding-left: 21px;
}

.neph {
    padding-left: 1px;
}

.neph input {
    width: 179px;
    margin-left: 1px;
    font-weight: bold;
}

.toggle {
    display: inline-block;
    height: 22px;
    line-height: 20px;
    color: white;
    font-size: 11px;
    font-weight: bold;
}

.toggle input {
    position: absolute;
    opacity: 0;
}

.toggle.on {
    padding: 0 18px 0 5px;
    border: 1px solid #4cae4c;
    background: var(--success);
    box-shadow: inset -6px 0 white, inset -7px 0 #ccc;
}

.toggle.on.wide {
    padding: 0 29px 0 11px;
}

.toggle.off {
    border: 1px solid #d43f3a;
    background: #c9302c;
    box-shadow: inset 5px 0 white, inset 6px 0 #ccc, inset 0 3px 5px rgba(0,0,0,0.13);
    padding: 0 7px 0 12px;
}

.focused {
    background: #269abc;
    border-color: #1b6d85;
    border-radius: 3px;
    outline: 2px solid #111;
    outline-offset: -4px;
    box-shadow: inset 0 0 0 1px white;
}

.tip-anchor {
    position: relative;
}

.tooltip {
    position: absolute;
    left: 50%;
    bottom: 30px;
    transform: translateX(-50%);
    padding: 9px 10px;
    border: 1px solid #111;
    border-radius: 4px;
    background: rgba(255,255,255,0.95);
    color: #333;
    font: 12px/19px "Liberation Sans", Arial, sans-serif;
    white-space: nowrap;
}

.tooltip::after {
    content: "";
    position: absolute;
    left: 50%;
    top: 100%;
    margin-left: -5px;
    border: 5px solid transparent;
    border-top-color: #111;
    border-bottom: 0;
}

.guardian {
    display: grid;
    grid-template-columns: 247fr 232fr 196fr 247fr 267fr 48px;
    height: 41px;
    padding: 8px 8px 0 9px;
}

.guardian-tools {
    display: flex;
    gap: 5px;
}

.guardian-tools .btn {
    width: 22px;
}

.counts {
    display: flex;
    gap: 20px;
    margin-left: auto;
    margin-right: 35px;
}

.comment-label {
    display: block;
    margin: -1px 0 2px 10px;
    font-weight: bold;
    line-height: 18px;
}

textarea {
    display: block;
    width: 100%;
}

.comments {
    width: calc(100% - 30px);
    height: 48px;
    margin-left: 15px;
    margin-bottom: 8px;
}

.sub-tabs {
    flex-wrap: wrap;
    row-gap: 0;
}

.sub-tabs .no-icon {
    padding-left: 20px;
}

.thread {
    border: 1px solid #f4f4f4;
    border-top: 0;
    padding-bottom: 20px;
}

.send {
    display: flex;
    justify-content: flex-end;
    padding-top: 1px;
}

.reply {
    height: 34px;
    padding: 6px 13px;
    border-radius: 0;
    font-size: 14px;
    line-height: 20px;
}

.reply::placeholder {
    color: #555;
}

.note {
    margin-top: 10px;
    height: 68px;
    padding: 9px 15px;
    border: 1px solid #ddd;
    border-radius: 4px;
}

.author {
    display: flex;
    align-items: center;
    gap: 7px;
    font-weight: bold;
    color: #222;
}

.person {
    width: 18px;
    height: 19px;
}

.seen {
    width: 16px;
    height: 12px;
    margin-top: 14px;
}

/* Resize corner of the window */
.grip {
    position: fixed;
    right: 1px;
    bottom: 1px;
    width: 9px;
    height: 9px;
}
```
